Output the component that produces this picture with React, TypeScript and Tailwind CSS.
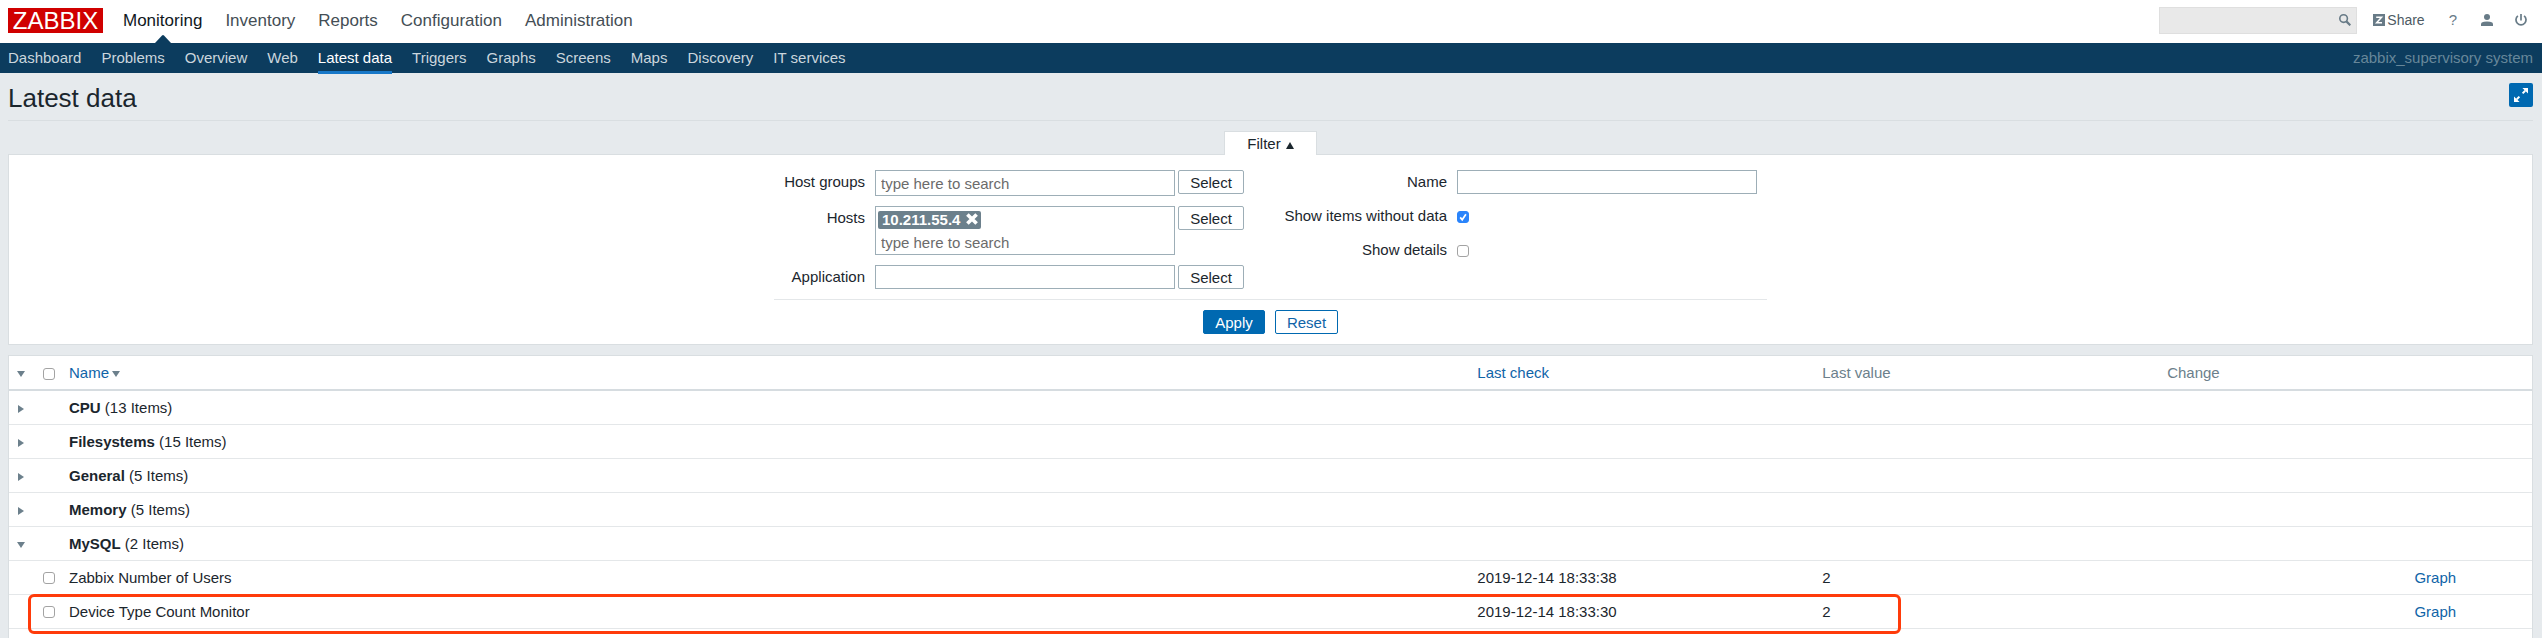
import { useState } from "react";
import type { ReactNode } from "react";

const mainMenu = ["Monitoring", "Inventory", "Reports", "Configuration", "Administration"];
const subMenu = [
  "Dashboard", "Problems", "Overview", "Web", "Latest data", "Triggers",
  "Graphs", "Screens", "Maps", "Discovery", "IT services",
];
const groups = [
  { name: "CPU", count: 13, open: false },
  { name: "Filesystems", count: 15, open: false },
  { name: "General", count: 5, open: false },
  { name: "Memory", count: 5, open: false },
  { name: "MySQL", count: 2, open: true },
];
const items = [
  { name: "Zabbix Number of Users", check: "2019-12-14 18:33:38", value: "2" },
  { name: "Device Type Count Monitor", check: "2019-12-14 18:33:30", value: "2" },
];

const selectButton =
  "h-6 w-[66px] shrink-0 rounded-[2px] border border-[#9daeb7] bg-white pt-px leading-5 text-[#1b262d]";
const textField = "w-[300px] border border-[#9daeb7] bg-white px-[5px] outline-none placeholder:text-[#6b6b6b]";

function CheckBox({ label, id, initial = false }: { label?: string; id?: string; initial?: boolean }) {
  const [on, setOn] = useState(initial);
  return (
    <span className="relative mt-px block size-3">
      <input
        type="checkbox"
        id={id}
        aria-label={label}
        checked={on}
        onChange={() => setOn(!on)}
        className="block size-3 appearance-none rounded-[3px] border border-[#a3a3a3] bg-white checked:border-[#2a84fb] checked:bg-[#2a84fb]"
      />
      {on && (
        <svg viewBox="0 0 12 12" className="pointer-events-none absolute inset-0 size-3">
          <path d="M3.2 6.4 5.2 8.8 8.9 3.2" fill="none" stroke="#fff" strokeWidth="1.7" />
        </svg>
      )}
    </span>
  );
}

function Arrow({ open }: { open: boolean }) {
  return (
    <svg viewBox="0 0 8 8" className="mt-[2px] block size-2 fill-[#6c808c]">
      {open ? <path d="M0 1h8L4 7z" /> : <path d="M1 0v8l6-4z" />}
    </svg>
  );
}

function MultiRow({ id, label, children }: { id: string; label: string; children: ReactNode }) {
  return (
    <div className="flex items-start">
      <label htmlFor={id} className="mr-[10px] w-[91px] text-right leading-6">{label}</label>
      {children}
      <button type="button" aria-label={"Select " + label} className={selectButton + " ml-[3px]"}>Select</button>
    </div>
  );
}

export default function App() {
  return (
    <div className="flex min-h-screen flex-col bg-[#e6eaed] font-['Liberation_Sans',Arial,sans-serif] text-[15px] leading-5 text-[#1b262d]">
      <header>
        <div className="flex h-[43px] items-stretch justify-between bg-white pr-[15px] pl-2">
          <div className="flex">
            <a href="#home" className="mt-2 mr-5 flex h-[25px] w-[95px] items-center justify-center bg-[#d00000] text-2xl leading-none text-white">
              ZABBIX
            </a>
            <nav className="flex gap-[23px] text-[17px] leading-[41px] text-[#444e55]">
              {mainMenu.map((m, i) => (
                <a key={m} href={"#" + m} className={i === 0 ? "relative text-[#10181d]" : ""}>
                  {m}
                  {i === 0 && (
                    <svg viewBox="0 0 16 8" className="absolute bottom-0 left-1/2 h-2 w-4 -translate-x-1/2 fill-[#0c3c5e]">
                      <path d="M0 8 7 .6Q8-.4 9 .6L16 8z" />
                    </svg>
                  )}
                </a>
              ))}
            </nav>
          </div>
          <div className="flex items-center pb-[3px] text-[#687b87]">
            <div className="mr-4 flex h-[27px] w-[198px] items-center border border-[#dfdfdf] bg-[#e9e9e9] pr-[5px]">
              <input type="text" aria-label="Search" className="min-w-0 flex-1 bg-transparent px-1 outline-none" />
              <button type="button" aria-label="Run search">
                <svg viewBox="0 0 12 12" className="block size-3" fill="none" stroke="currentColor">
                  <circle cx="4.6" cy="4.6" r="3.8" strokeWidth="1.6" />
                  <path d="m7.4 7.4 3.9 3.9" strokeWidth="2.2" />
                </svg>
              </button>
            </div>
            <a href="#share" className="mr-6 flex items-center gap-[2px] text-sm text-[#4d5a63]">
              <svg viewBox="0 0 12 12" className="size-3">
                <path d="M0 0h12v12H0z" fill="#687b87" />
                <path d="M3.2 3.2h5.4L3.6 8.8h5.4" fill="none" stroke="#fff" strokeWidth="1.5" />
              </svg>
              Share
            </a>
            <a href="#help" className="mr-6 text-[15px]">?</a>
            <a href="#profile" aria-label="Profile" className="mr-[22px]">
              <svg viewBox="0 0 12 12" className="block size-3 fill-current">
                <circle cx="6" cy="3" r="3" />
                <path d="M0 12V9.8Q0 8.4 3 7.7Q6 7.1 9 7.7Q12 8.4 12 9.8V12z" />
              </svg>
            </a>
            <a href="#logout" aria-label="Sign out">
              <svg viewBox="0 0 12 12" className="block size-3" fill="none" stroke="currentColor" strokeWidth="1.7">
                <path d="M6 0v6.4M2.9 1.9a5 5 0 1 0 6.2 0" />
              </svg>
            </a>
          </div>
        </div>
        <div className="flex h-[30px] justify-between bg-[#0c3c5e] pr-[9px] pl-2">
          <nav className="flex gap-5 leading-[30px] text-[#cbd6dd]">
            {subMenu.map((m) => (
              <a
                key={m}
                href={"#" + m}
                className={m === "Latest data" ? "relative h-[31px] text-white after:absolute after:inset-x-0 after:bottom-0 after:h-[3px] after:bg-[#1878c8]" : ""}
              >
                {m}
              </a>
            ))}
          </nav>
          <span className="leading-[30px] text-[#67879a]">zabbix_supervisory system</span>
        </div>
      </header>

      <main className="flex flex-1 flex-col pr-[9px] pl-2">
        <div className="flex h-12 items-center justify-between border-b border-[#d9dee1]">
          <h1 className="pt-[2px] text-[26px] leading-8">Latest data</h1>
          <button type="button" aria-label="Fullscreen" className="mb-[3px] flex size-6 items-center justify-center rounded-[2px] bg-[#0069b1]">
            <svg viewBox="0 0 14 14" className="size-[14px]" fill="#fff" stroke="#fff">
              <path d="M8.4 0H14v5.6z M0 8.4V14h5.6z" stroke="none" />
              <path d="m8.6 5.4 2.6-2.6M5.4 8.6l-2.6 2.6" strokeWidth="2" />
            </svg>
          </button>
        </div>

        <div className="mt-[10px] flex justify-center">
          <button type="button" className="z-10 -mb-px flex h-6 w-[93px] items-center justify-center gap-[5px] border border-b-0 border-[#d9dee1] bg-white">
            Filter
            <svg viewBox="0 0 8 7" className="mt-1 h-[7px] w-2 fill-[#1b262d]"><path d="M0 7h8L4 0z" /></svg>
          </button>
        </div>
        <form className="flex flex-col items-center border border-[#d9dee1] bg-white pt-[15px] pb-[10px]" onSubmit={(e) => e.preventDefault()}>
          <div className="flex w-[993px] justify-between border-b border-[#e4e7e9] pr-[10px] pb-[10px]">
            <div className="flex flex-col gap-[10px]">
              <MultiRow id="groups" label="Host groups">
                <input id="groups" placeholder="type here to search" className={textField + " h-[26px]"} />
              </MultiRow>
              <MultiRow id="hosts" label="Hosts">
                <div className="flex h-[49px] w-[300px] flex-col items-start border border-[#9daeb7] pt-1">
                  <span className="ml-[2px] flex h-[18px] items-center gap-[6px] rounded-[2px] bg-[#6c808c] pr-[3px] pl-1 leading-[18px] font-bold text-white">
                    10.211.55.4
                    <button type="button" aria-label="Remove 10.211.55.4" className="mb-[2px]">
                      <svg viewBox="0 0 12 12" className="block size-3" stroke="#fff" strokeWidth="3.6">
                        <path d="m1.4 1.4 9.2 9.2M10.6 1.4l-9.2 9.2" />
                      </svg>
                    </button>
                  </span>
                  <input id="hosts" placeholder="type here to search" className="mt-1 h-5 w-full bg-transparent px-[5px] outline-none placeholder:text-[#6b6b6b]" />
                </div>
              </MultiRow>
              <MultiRow id="application" label="Application">
                <input id="application" className={textField + " h-6"} />
              </MultiRow>
            </div>
            <div className="flex flex-col gap-[10px]">
              <div className="flex justify-end gap-[10px] leading-6">
                <label htmlFor="name">Name</label>
                <input id="name" className={textField + " h-6"} />
              </div>
              <div className="flex items-center justify-end gap-[10px] leading-6">
                <label htmlFor="nodata">Show items without data</label>
                <div className="w-[300px]"><CheckBox id="nodata" initial /></div>
              </div>
              <div className="flex items-center justify-end gap-[10px] leading-6">
                <label htmlFor="details">Show details</label>
                <div className="w-[300px]"><CheckBox id="details" /></div>
              </div>
            </div>
          </div>
          <div className="mt-[10px] flex gap-[10px]">
            <button type="submit" className="h-6 w-[62px] rounded-[2px] border border-[#0069b1] bg-[#0069b1] pt-px text-white">Apply</button>
            <button type="reset" className="h-6 w-[63px] rounded-[2px] border border-[#0069b1] bg-white pt-px text-[#0f64a8]">Reset</button>
          </div>
        </form>

        <div className="relative mt-[10px] flex-1 border border-b-0 border-[#d9dee1] bg-white">
          <table className="w-full table-fixed border-collapse text-left [&_td]:pt-px [&_th]:pt-px">
            <colgroup>
              <col className="w-[28px]" />
              <col className="w-[26px]" />
              <col />
              <col className="w-[13.67%]" />
              <col className="w-[13.67%]" />
              <col className="w-[9.8%]" />
              <col className="w-[4.9%]" />
            </colgroup>
            <thead>
              <tr className="h-[34px] border-b-2 border-[#d6dce0] text-[#6c7f8b]">
                <th className="pl-2"><Arrow open /></th>
                <th className="pl-[6px]"><CheckBox label="Select all" /></th>
                <th className="pl-[6px] font-normal">
                  <a href="#sort-name" className="flex items-center gap-[3px] text-[#0f64a8]">Name <Arrow open /></a>
                </th>
                <th className="pl-[6px] font-normal"><a href="#sort-check" className="text-[#0f64a8]">Last check</a></th>
                <th className="pl-[6px] font-normal">Last value</th>
                <th className="pl-[6px] font-normal">Change</th>
                <th />
              </tr>
            </thead>
            <tbody>
              {groups.map((g) => (
                <tr key={g.name} className="h-[34px] border-b border-[#e4e7e9]">
                  <td className="pl-2">
                    <button type="button" aria-label={"Toggle " + g.name} className="block"><Arrow open={g.open} /></button>
                  </td>
                  <td />
                  <td colSpan={5} className="pl-[6px]"><b>{g.name}</b> ({g.count} Items)</td>
                </tr>
              ))}
              {items.map((it) => (
                <tr key={it.name} className="h-[34px] border-b border-[#e4e7e9]">
                  <td />
                  <td className="pl-[6px]"><CheckBox label={it.name} /></td>
                  <td className="pl-[6px]">{it.name}</td>
                  <td className="pl-[6px]">{it.check}</td>
                  <td className="pl-[6px]">{it.value}</td>
                  <td />
                  <td className="pl-[6px]"><a href="#graph" className="text-[#0f64a8]">Graph</a></td>
                </tr>
              ))}
            </tbody>
          </table>
          <div className="pointer-events-none absolute top-[238px] left-[19px] h-[40px] w-[74.25%] rounded-[6px] border-3 border-[#ff3b0a]" />
        </div>
      </main>
    </div>
  );
}
